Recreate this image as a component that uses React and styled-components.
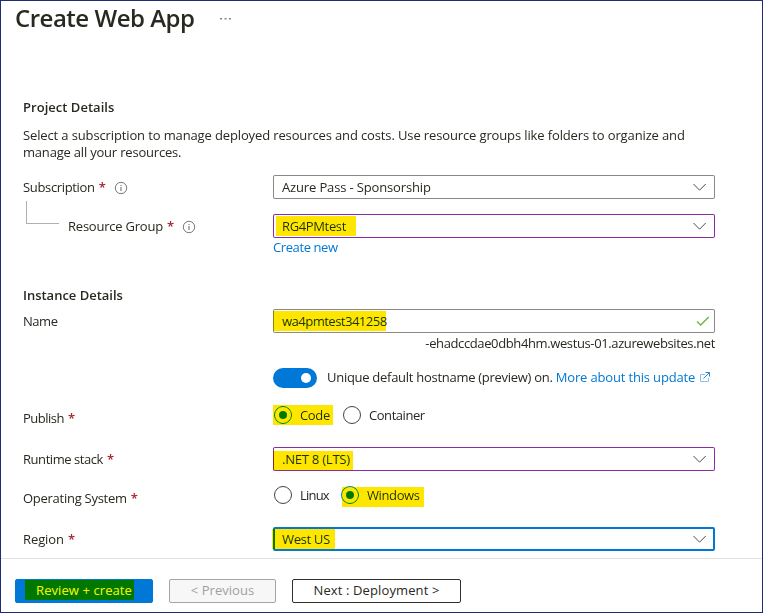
import React from "react";
import styled, { createGlobalStyle, css } from "styled-components";

const GlobalStyle = createGlobalStyle`
  *, *::before, *::after { box-sizing: border-box; }
  body { margin: 0; background: #fff; }
`;

const Page = styled.main`
  width: 763px;
  height: 613px;
  overflow: hidden;
  border: 1px solid #202b78;
  background: #fff;
  color: #292821;
  font: 400 13px/18px "Open Sans", "Noto Sans", sans-serif;
  display: flex;
  flex-direction: column;
`;

const Text = styled.span`
  letter-spacing: ${(p) => p.$track || 0}px;
  white-space: nowrap;
`;

const TitleBar = styled.header`
  height: 33px;
  padding-left: 14px;
  display: flex;
  align-items: center;
  gap: 25px;
  flex: none;
`;

const Title = styled.h1`
  margin: 0;
  font-size: 24px;
  line-height: 33px;
  font-weight: 600;
  letter-spacing: -0.49px;
  white-space: nowrap;
`;

const Form = styled.section`
  padding: 64px 0 0 22px;
  height: 524px;
  flex: none;
`;

const Heading = styled.h2`
  margin: ${(p) => p.$top || 0}px 0 0;
  font-size: 13px;
  line-height: 18px;
  font-weight: 600;
  letter-spacing: ${(p) => p.$track || 0}px;
`;

const Intro = styled.p`
  margin: 11px 0 0;
  line-height: 17px;
  display: flex;
  flex-direction: column;
`;

const Row = styled.div`
  display: grid;
  grid-template-columns: 250px 442px;
  margin-top: ${(p) => p.$top}px;
  height: ${(p) => p.$height || 24}px;
`;

const Label = styled.div`
  display: flex;
  align-items: center;
  height: 24px;
  margin-top: ${(p) => p.$drop || 0}px;
`;

const Star = styled.span`
  width: 7px;
  margin-left: 4px;
  color: #a4262c;
  font-weight: 600;
`;

const InfoSvg = styled.svg`
  width: 14px;
  height: 14px;
  margin: 1px 0 0 8px;
`;

const Connector = styled.span`
  width: 33px;
  height: 23px;
  margin: -13px 9px 0 3px;
  align-self: flex-start;
  flex: none;
  border: solid #b0b0b0;
  border-width: 0 0 1px 1px;
`;

const Highlight = styled.span`
  position: absolute;
  left: ${(p) => p.$x}px;
  top: ${(p) => p.$y}px;
  width: ${(p) => p.$w}px;
  height: ${(p) => p.$h || 20}px;
  background: #ffe600;
  mix-blend-mode: darken;
  pointer-events: none;
`;

const tones = { normal: "#8a8a85", edited: "#8a2da5", focused: "#0078d7" };

const Field = styled.div`
  position: relative;
  height: 24px;
  display: flex;
  align-items: center;
  justify-content: space-between;
  border-radius: 2px;
  padding: 0 8px 0 9px;
  background: #fff;
  box-shadow: inset 0 0 0 ${(p) => (p.$tone === "focused" ? 2 : 1)}px
    ${(p) => tones[p.$tone || "normal"]};
`;

const Icon = styled.svg`
  flex: none;
  width: 14px;
  height: 12px;
  margin-right: ${(p) => p.$right || 0}px;
  margin-left: ${(p) => p.$left || 0}px;
`;

const Link = styled.a`
  color: #0078d4;
  letter-spacing: ${(p) => p.$track}px;
  white-space: nowrap;
  text-decoration: none;
`;

const BelowField = styled.div`
  height: 17px;
  line-height: 17px;
  margin: ${(p) => p.$top}px 0 0 250px;
  width: 442px;
  text-align: ${(p) => p.$align || "left"};
`;

const ToggleRow = styled.div`
  display: flex;
  align-items: center;
  height: 20px;
  line-height: 18px;
  margin: 16px 0 0 250px;
`;

const ToggleCaption = styled.span`
  display: flex;
  align-items: center;
  height: 18px;
  margin-bottom: 2px;
`;

const Toggle = styled.span`
  width: 44px;
  height: 20px;
  margin-right: 10px;
  padding-right: 6px;
  border-radius: 10px;
  background: #0078d7;
  display: flex;
  align-items: center;
  justify-content: flex-end;
  &::after {
    content: "";
    width: 10px;
    height: 10px;
    border-radius: 50%;
    background: #fff;
  }
`;

const Options = styled.div`
  position: relative;
  display: flex;
  height: 20px;
  padding-left: 1px;
`;

const Option = styled.label`
  display: flex;
  align-items: center;
  gap: 8px;
  height: 20px;
  width: ${(p) => (p.$width ? `${p.$width}px` : "auto")};
`;

const Ring = styled.span`
  width: 18px;
  height: 18px;
  border-radius: 50%;
  border: 1px solid #45453f;
  display: flex;
  align-items: center;
  justify-content: center;
  ${(p) =>
    p.$on &&
    css`
      border-color: #0078d7;
      &::after {
        content: "";
        width: 8px;
        height: 8px;
        border-radius: 50%;
        background: #0078d7;
      }
    `}
`;

const Footer = styled.footer`
  flex: 1;
  border-top: 1px solid #e1e1e1;
  padding: 20px 0 0 14px;
  display: flex;
  gap: 16px;
`;

const buttonKinds = {
  primary: css`background: #0078d7; color: #fff; border-color: #0078d7;`,
  disabled: css`background: #f7f7f7; color: #a19f9d; border-color: #a5a4a2;`,
  plain: css`background: #fff; color: #292821; border-color: #30302c;`,
};

const Button = styled.button`
  position: relative;
  width: ${(p) => p.$width}px;
  height: 24px;
  padding: 0 0 2px;
  border: 1px solid;
  border-radius: 2px;
  font: inherit;
  line-height: 20px;
  ${(p) => buttonKinds[p.$kind]}
`;

const Info = () => (
  <InfoSvg viewBox="0 0 14 14" fill="none">
    <circle cx="7" cy="7" r="5.7" stroke="#7a7a7a" />
    <path d="M7 6v4M7 4v1" stroke="#8a8a8a" strokeWidth="1.3" />
  </InfoSvg>
);

const Chevron = () => (
  <Icon viewBox="0 0 14 12" fill="none">
    <path d="M.5 3 6.6 9.2 12.7 3" stroke="#4d4d48" />
  </Icon>
);

function FieldLabel({ children, track, required, info, nested, drop }) {
  return (
    <Label $drop={drop}>
      {nested && <Connector />}
      <Text $track={track}>{children}</Text>
      {required && <Star>*</Star>}
      {info && <Info />}
    </Label>
  );
}

function Select({ value, track, tone, mark }) {
  return (
    <Field $tone={tone}>
      <Text $track={track}>{value}</Text>
      <Chevron />
      {mark && <Highlight $x={mark[0]} $y={mark[1]} $w={mark[2]} $h={mark[3]} />}
    </Field>
  );
}

export default function App() {
  return (
    <>
      <GlobalStyle />
      <Page>
        <TitleBar>
          <Title>Create Web App</Title>
          <Icon viewBox="0 0 14 12" fill="#85857f">
            <path d="M1 6h2v1.5H1zM5.5 6h2v1.5h-2zM10 6h2v1.5h-2z" />
          </Icon>
        </TitleBar>
        <Form>
          <Heading $track={0.03}>Project Details</Heading>
          <Intro>
            <Text $track={-0.128}>
              Select a subscription to manage deployed resources and costs. Use resource groups like folders to organize and
            </Text>
            <Text $track={-0.199}>manage all your resources.</Text>
          </Intro>
          <Row $top={14}>
            <FieldLabel track={-0.342} required info>Subscription</FieldLabel>
            <Select value="Azure Pass - Sponsorship" track={-0.145} />
          </Row>
          <Row $top={15}>
            <FieldLabel track={-0.22} required info nested>Resource Group</FieldLabel>
            <Select value="RG4PMtest" track={-0.36} tone="edited" mark={[3, 2, 80, 20]} />
          </Row>
          <BelowField $top={1}>
            <Link $track={-0.4}>Create new</Link>
          </BelowField>

          <Heading $top={30} $track={-0.018}>Instance Details</Heading>
          <Row $top={5}>
            <FieldLabel track={-0.45}>Name</FieldLabel>
            <Field>
              <Text $track={-0.5}>wa4pmtest341258</Text>
              <Icon viewBox="0 0 14 12" fill="none" $right={-3}>
                <path d="M1 6.5 4.7 10 12.7 2" stroke="#6bb53a" strokeWidth="1.3" />
              </Icon>
              <Highlight $x={0} $y={2} $w={113} />
            </Field>
          </Row>
          <BelowField $top={2} $align="right">
            <Text $track={-0.38}>-ehadccdae0dbh4hm.westus-01.azurewebsites.net</Text>
          </BelowField>
          <ToggleRow>
            <Toggle />
            <ToggleCaption>
              <Text $track={-0.28}>Unique default hostname (preview) on.&nbsp;</Text>
              <Link $track={-0.16}>More about this update</Link>
              <Icon viewBox="0 0 14 12" fill="none" $left={2}>
                <path d="M8 3.5H3.5v7h8V7" stroke="#8cc0ea" />
                <path d="M6.5 7.5 12.5 1.5M8.5 1.5h4v4" stroke="#2586d8" />
              </Icon>
            </ToggleCaption>
          </ToggleRow>
          <Row $top={17} $height={28}>
            <FieldLabel track={-0.501} required drop={1}>Publish</FieldLabel>
            <Options>
              <Option $width={69}>
                <Ring $on />
                <Text $track={-0.321}>Code</Text>
              </Option>
              <Option>
                <Ring />
                <Text $track={-0.45}>Container</Text>
              </Option>
              <Highlight $x={0} $y={0} $w={60} />
            </Options>
          </Row>
          <Row $top={14}>
            <FieldLabel track={-0.44} required>Runtime stack</FieldLabel>
            <Select value=".NET 8 (LTS)" track={-0.22} tone="edited" mark={[0, 4, 80, 19]} />
          </Row>
          <Row $top={14}>
            <FieldLabel track={-0.27} required drop={1}>Operating System</FieldLabel>
            <Options>
              <Option $width={67}>
                <Ring />
                <Text $track={-0.8}>Linux</Text>
              </Option>
              <Option>
                <Ring $on />
                <Text $track={-0.39}>Windows</Text>
              </Option>
              <Highlight $x={69} $y={2} $w={82} />
            </Options>
          </Row>
          <Row $top={18}>
            <FieldLabel track={-0.097} required>Region</FieldLabel>
            <Select value="West US" track={-0.35} tone="focused" mark={[-1, 2, 63, 20]} />
          </Row>
        </Form>
        <Footer>
          <Button $kind="primary" $width={138}>
            <Text $track={0.08}>Review + create</Text>
            <Highlight $x={9} $y={0} $w={109} />
          </Button>
          <Button $kind="disabled" $width={107} disabled>
            <Text $track={0.05}>&lt; Previous</Text>
          </Button>
          <Button $kind="plain" $width={169}>
            <Text $track={0.121}>Next : Deployment &gt;</Text>
          </Button>
        </Footer>
      </Page>
    </>
  );
}
